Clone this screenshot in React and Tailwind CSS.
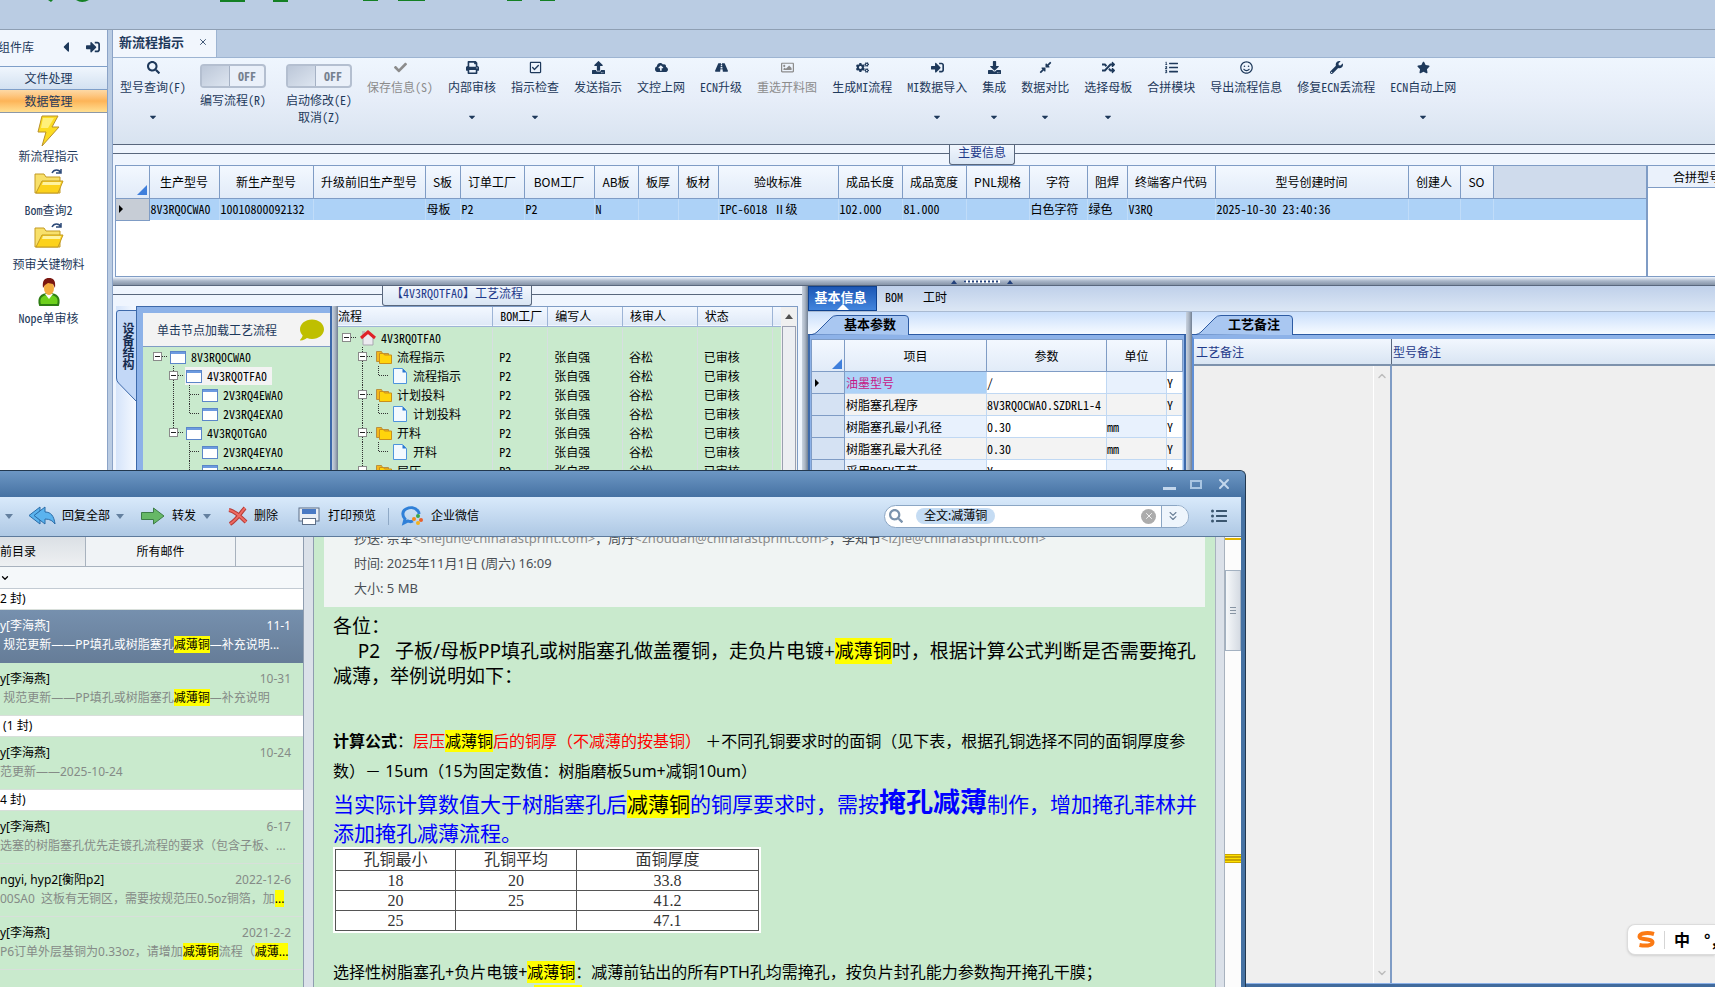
import React, { useState } from "react";
import {
  FaSearch,
  FaCheck,
  FaPrint,
  FaRegCheckSquare,
  FaUpload,
  FaCloudUploadAlt,
  FaRoad,
  FaRegImage,
  FaCogs,
  FaSignInAlt,
  FaDownload,
  FaCompressAlt,
  FaRandom,
  FaListOl,
  FaRegSmile,
  FaWrench,
  FaStar,
  FaCaretDown,
  FaCaretLeft,
  FaComment,
  FaListUl
} from "react-icons/fa";
import { ChevronDown, ChevronUp, ChevronsDown, X } from "lucide-react";

const toolbarItems = [
  { label: "保存信息(S)", icon: FaCheck, disabled: true },
  { label: "内部审核", icon: FaPrint, menu: true },
  { label: "指示检查", icon: FaRegCheckSquare, menu: true },
  { label: "发送指示", icon: FaUpload },
  { label: "文控上网", icon: FaCloudUploadAlt },
  { label: "ECN升级", icon: FaRoad },
  { label: "重选开料图", icon: FaRegImage, disabled: true },
  { label: "生成MI流程", icon: FaCogs },
  { label: "MI数据导入", icon: FaSignInAlt, menu: true },
  { label: "集成", icon: FaDownload, menu: true },
  { label: "数据对比", icon: FaCompressAlt, menu: true },
  { label: "选择母板", icon: FaRandom, menu: true },
  { label: "合拼模块", icon: FaListOl },
  { label: "导出流程信息", icon: FaRegSmile },
  { label: "修复ECN丢流程", icon: FaWrench },
  { label: "ECN自动上网", icon: FaStar, menu: true }
];

const mainColumns = [
  { name: "生产型号", width: 70, value: "8V3RQ0CWA0" },
  { name: "新生产型号", width: 94, value: "10010800092132" },
  { name: "升级前旧生产型号", width: 112, value: "" },
  { name: "S板", width: 35, value: "母板" },
  { name: "订单工厂", width: 64, value: "P2" },
  { name: "BOM工厂", width: 70, value: "P2" },
  { name: "AB板", width: 44, value: "N" },
  { name: "板厚", width: 40, value: "" },
  { name: "板材", width: 40, value: "" },
  { name: "验收标准", width: 120, value: "IPC-6018 Ⅱ级" },
  { name: "成品长度", width: 64, value: "102.000" },
  { name: "成品宽度", width: 64, value: "81.000" },
  { name: "PNL规格", width: 63, value: "" },
  { name: "字符", width: 58, value: "白色字符" },
  { name: "阻焊", width: 40, value: "绿色" },
  { name: "终端客户代码", width: 88, value: "V3RQ" },
  { name: "型号创建时间", width: 193, value: "2025-10-30 23:40:36" },
  { name: "创建人", width: 52, value: "" },
  { name: "SO", width: 33, value: "" }
];

const boardTree = [
  { label: "8V3RQ0CWA0", cells: ["root"] },
  { label: "4V3RQ0TFA0", cells: ["blank", "box"], selected: true },
  { label: "2V3RQ4EWA0", cells: ["blank", "line", "tee"] },
  { label: "2V3RQ4EXA0", cells: ["blank", "line", "end"] },
  { label: "4V3RQ0TGA0", cells: ["blank", "lastBox"] },
  { label: "2V3RQ4EYA0", cells: ["blank", "blank", "tee"] },
  { label: "2V3RQ4EZA0", cells: ["blank", "blank", "tee"] }
];

const processTree = [
  { label: "4V3RQ0TFA0", icon: "home", cells: ["root"] },
  { label: "流程指示", icon: "folder", cells: ["blank", "box"] },
  { label: "流程指示", icon: "file", cells: ["blank", "line", "end"] },
  { label: "计划投料", icon: "folder", cells: ["blank", "box"] },
  { label: "计划投料", icon: "file", cells: ["blank", "line", "end"] },
  { label: "开料", icon: "folder", cells: ["blank", "box"] },
  { label: "开料", icon: "file", cells: ["blank", "line", "end"] },
  { label: "层压", icon: "folder", cells: ["blank", "box"] }
];

const params = [
  { name: "油墨型号", value: "/", unit: "", active: true },
  { name: "树脂塞孔程序", value: "8V3RQ0CWA0.SZDRL1-4", unit: "" },
  { name: "树脂塞孔最小孔径", value: "0.30", unit: "mm" },
  { name: "树脂塞孔最大孔径", value: "0.30", unit: "mm" },
  { name: "采用POFV工艺", value: "Y", unit: "" }
];

const Caret = ({ className = "" }) => (
  <svg viewBox="0 0 8 5" className={`w-2 h-[5px] shrink-0 ${className}`}>
    <path d="M0 0h8L4 5z" fill="currentColor" />
  </svg>
);

const TreeCell = ({ kind }) => {
  const box = kind === "root" || kind === "box" || kind === "lastBox";
  const dots = { stroke: "#333", strokeDasharray: "1 1", fill: "none" };
  return (
    <svg className="w-4 h-[19px] overflow-visible shrink-0">
      {(kind === "line" || kind === "tee" || kind === "box") && (
        <path d="M8.5 0v19" {...dots} />
      )}
      {(kind === "end" || kind === "lastBox") && (
        <path d="M8.5 0v9" {...dots} />
      )}
      {kind !== "line" && kind !== "blank" && (
        <path d="M9 9.5h9" {...dots} />
      )}
      {box && (
        <>
          <rect x="4.5" y="5.5" width="8" height="8" fill="#fff" stroke="#8a8a8a" />
          <path d="M6 9.5h5" stroke="#222" />
        </>
      )}
    </svg>
  );
};

const WindowIcon = () => (
  <svg viewBox="0 0 16 14" className="w-4 h-[14px] shrink-0">
    <rect x="0.5" y="1.5" width="15" height="12" fill="#fff" stroke="#5b86c8" />
    <rect x="1" y="2" width="14" height="2" fill="#6d9be0" />
  </svg>
);

const NodeIcon = ({ type }) => {
  if (type === "home") {
    return (
      <svg viewBox="0 0 16 16" className="w-4 h-4 shrink-0">
        <path d="M3 8l5-5 5 5v7H3z" fill="#eceaf0" stroke="#a9a7b0" />
        <path d="M2 1h3v4H2z" fill="#bbb" />
        <path d="M1 8l7-6 7 6" stroke="#e02228" strokeWidth="3" fill="none" />
      </svg>
    );
  }
  if (type === "folder") {
    return (
      <svg viewBox="0 0 16 14" className="w-4 h-[14px] shrink-0">
        <path d="M.5 1.500h5l1 2h6v8H.5z" fill="#f5b81c" stroke="#b9903f" />
        <path d="M3.500 3.500h4l1 1.500h7v8.500h-12z" fill="#ffd40c" stroke="#c98f1c" />
      </svg>
    );
  }
  return (
    <svg viewBox="0 0 14 16" className="w-[14px] h-4 shrink-0 mx-px">
      <path d="M.5.5h9l4 4v11H.5z" fill="#f3f9ff" stroke="#4d94dc" />
      <path d="M9.500.5l4 4h-4z" fill="#2b78d2" />
    </svg>
  );
};

const LightningIcon = () => (
  <svg viewBox="0 0 24 32" className="w-6 h-8">
    <path d="M5 1h16l-6 11h7L5 31l4-14H1z" fill="#fcdc22" stroke="#b8902a" />
    <path d="M6 3h11l-6 10H4z" fill="#fff07a" />
  </svg>
);

const OpenFolderIcon = () => (
  <svg viewBox="0 0 30 26" className="w-[30px] h-[26px]">
    <path d="M1 5h9l2 3h14v16H1z" fill="#f8e06a" stroke="#c39a22" />
    <path d="M8 12h21l-5 12H2z" fill="#fcd21c" stroke="#c39a22" />
    <path d="M9 13h18l-1 3H8z" fill="#fff3a0" />
    <path d="M18 4c2-4 7-4 9 0M27 0v4h-5" stroke="#2d4a78" strokeWidth="1.500" fill="none" />
  </svg>
);

const PersonIcon = () => (
  <svg viewBox="0 0 24 30" className="w-6 h-[30px]">
    <path d="M3 28c-2-7 1-11 9-11s11 4 9 11z" fill="#6ed01c" stroke="#2d7d12" strokeWidth="2" />
    <path d="M8 17l4 5 4-5z" fill="#fff" />
    <ellipse cx="12" cy="11" rx="5" ry="7" fill="#f3ac3e" />
    <path d="M6 11C5 3 8 1 12 1s7 2 6 10l-2-4-5-1-3 2z" fill="#7a1710" />
  </svg>
);

const sideItems = [
  { label: "新流程指示", icon: LightningIcon },
  { label: "Bom查询2", icon: OpenFolderIcon },
  { label: "预审关键物料", icon: OpenFolderIcon },
  { label: "Nope单审核", icon: PersonIcon }
];

const Sidebar = () => (
  <aside className="w-[108px] shrink-0 flex flex-col bg-white border-r border-[#8ba3c7] text-[#1e395b]">
    <div className="h-9 flex items-center pb-0.5 bg-[#f1f6fd] overflow-hidden">
      <span className="-ml-0.5 w-[60px] shrink-0">组件库</span>
      <button aria-label="收起" className="w-7">
        <FaCaretLeft className="w-4 h-4" />
      </button>
      <button aria-label="固定">
        <FaSignInAlt className="w-[14px] h-[14px]" />
      </button>
    </div>
    <button className="h-6 pr-[10px] border-y border-[#7f9fc9] bg-gradient-to-b from-[#f0f6fd] to-[#d3e1f1]">
      文件处理
    </button>
    <button className="h-[23px] pr-[10px] border-b border-[#8b98a8] bg-gradient-to-b from-[#fdd9a5] via-[#fdb457] to-[#ffdf91]">
      数据管理
    </button>
    <nav className="flex flex-col">
      {sideItems.map((item) => (
        <button
          key={item.label}
          className="h-[54px] pr-[10px] flex flex-col items-center justify-between pt-0.5 pb-[3px]"
        >
          <item.icon />
          <span className="leading-4">{item.label}</span>
        </button>
      ))}
    </nav>
  </aside>
);

const ToolButton = ({ item }) => (
  <button
    disabled={item.disabled}
    className={`flex flex-col items-center whitespace-nowrap shrink-0 ${item.disabled ? "text-[#8c8c8c]" : "text-[#1e395b]"}`}
  >
    <item.icon className="w-[13px] h-[13px] mt-px" />
    <span className="leading-4 mt-[5px]">{item.label}</span>
    {item.menu && <FaCaretDown className="w-[10px] h-[10px] mt-[17px]" />}
  </button>
);

const Toggle = ({ lines }) => {
  const [on, setOn] = useState(false);
  return (
    <label className="w-[68px] shrink-0 flex flex-col items-center text-[#1e395b] whitespace-nowrap">
      <input
        type="checkbox"
        className="sr-only"
        checked={on}
        onChange={() => setOn(!on)}
      />
      <span className="w-[66px] h-6 mb-[3px] flex border-2 border-[#b4bfd0] rounded-sm bg-[#eaf0f9]">
        <span className="w-7 bg-gradient-to-br from-[#bcc7d8] to-[#dde5f0] border-r border-[#a5b1c4]" />
        <span className="flex-1 text-center leading-5 font-bold text-[#76818f]">
          {on ? "ON" : "OFF"}
        </span>
      </span>
      {lines.map((line) => (
        <span key={line} className="leading-[17px]">
          {line}
        </span>
      ))}
    </label>
  );
};

const Toolbar = () => (
  <div className="h-[87px] shrink-0 flex items-start gap-[15px] pl-[7px] pt-[2px] bg-gradient-to-b from-[#eff6fe] via-[#e6edf8] to-[#d8e3f0] border-b border-[#59677d] overflow-hidden">
    <ToolButton item={{ label: "型号查询(F)", icon: FaSearch, menu: true }} />
    <div className="flex gap-[18px] pt-1 -ml-[2px] -mr-px">
      <Toggle lines={["编写流程(R)"]} />
      <Toggle lines={["启动修改(E)", "取消(Z)"]} />
    </div>
    {toolbarItems.map((item) => (
      <ToolButton key={item.label} item={item} />
    ))}
  </div>
);

// Group frame with its title sitting on the top line
const GroupTitle = ({ children, className = "" }) => (
  <div className="h-5 shrink-0 flex items-start">
    <span className={`h-[9px] border-b border-[#59677d] ${className}`} />
    <span className="h-5 px-2 border border-t-0 border-[#59677d] rounded-b-[3px] bg-gradient-to-b from-[#f2f7fe] to-[#d9e5f3] text-[#1f3a8a] leading-[14px] whitespace-nowrap">
      {children}
    </span>
    <span className="flex-1 h-[9px] border-b border-[#59677d]" />
  </div>
);

const CornerMark = () => (
  <svg viewBox="0 0 10 10" className="w-[10px] h-[10px] ml-auto mr-[2px] mt-4">
    <path d="M10 0v10H0z" fill="#3f7fdc" />
  </svg>
);

const RowMark = () => (
  <svg viewBox="0 0 4 8" className="w-1 h-2 ml-[3px]">
    <path d="M0 0l4 4-4 4z" fill="#000" />
  </svg>
);

const MainGrid = () => (
  <section className="shrink-0 flex flex-col bg-[#eff5fe]">
    <GroupTitle className="w-[836px]">主要信息</GroupTitle>
    <div className="h-[112px] ml-[2px] flex border-y border-[#7f9cc5] bg-white">
      <div className="flex-1 min-w-0 border-l border-[#7f9cc5]">
        <table className="w-full table-fixed border-collapse whitespace-nowrap">
          <colgroup>
            <col style={{ width: 33 }} />
            {mainColumns.map((c) => (
              <col key={c.name} style={{ width: c.width }} />
            ))}
            <col />
          </colgroup>
          <thead>
            <tr className="h-8 bg-gradient-to-b from-[#f3f8ff] to-[#e1ebf8]">
              <th className="border-r border-b border-[#7f9cc5] p-0">
                <CornerMark />
              </th>
              {mainColumns.map((c) => (
                <th
                  key={c.name}
                  className="border-r border-b border-[#7f9cc5] p-0 font-normal text-black font-['Noto_Sans_CJK_SC',sans-serif]"
                >
                  {c.name}
                </th>
              ))}
              <th className="bg-[#cfdbec] border-b border-[#7f9cc5] p-0" />
            </tr>
          </thead>
          <tbody>
            <tr className="h-[22px] bg-[#add2f7]">
              <td className="bg-[#c7cdd6] border-r border-b border-[#7f9cc5] p-0">
                <RowMark />
              </td>
              {mainColumns.map((c) => (
                <td key={c.name} className="border-r border-[#c0dcf8] p-0 pl-px text-black">
                  {c.value}
                </td>
              ))}
              <td className="p-0" />
            </tr>
          </tbody>
        </table>
      </div>
      <div className="w-[69px] shrink-0 border-l-2 border-[#7f9cc5] overflow-hidden">
        <div className="h-[22px] pl-[25px] leading-[21px] border-b border-[#7f9cc5] bg-[#eaf1fb] text-black whitespace-nowrap font-['Noto_Sans_CJK_SC',sans-serif]">
          合拼型号
        </div>
      </div>
    </div>
    <div className="h-[9px] flex items-end justify-center bg-gradient-to-b from-[#eff5fe] via-[#a9b6c8] to-[#8593a7] border-b border-[#59677d]">
      <svg viewBox="0 0 62 6" className="w-[62px] h-[6px] ml-[136px]">
        <path d="M0 5l3-4 3 4zM56 5l3-4 3 4z" fill="#24427c" />
        <path d="M13 2.500h36" stroke="#fff" strokeWidth="3" />
        <path d="M13 2.500h36" stroke="#24427c" strokeWidth="2" strokeDasharray="2 2" />
      </svg>
    </div>
  </section>
);

const VSplitter = () => (
  <div className="w-[6px] shrink-0 bg-gradient-to-r from-[#c8d2df] via-[#aab5c4] to-[#717f92]" />
);

const BoardTree = () => (
  <div className="flex shrink-0 ml-[3px]">
    <div className="w-5 bg-gradient-to-r from-[#d5e4fa] to-[#f5f9ff] flex flex-col">
      <div className="relative h-[94px] mt-1">
        <svg viewBox="0 0 20 94" className="absolute inset-0 w-5 h-[94px]">
          <path d="M20 .5H3Q.5.5.5 3v65q0 3 2 5L20 91" fill="#c3d8f7" stroke="#3d69aa" />
        </svg>
        <span className="relative block pt-3 pl-[6px] font-bold text-[#152b50] leading-3 [writing-mode:vertical-rl]">
          设备结构
        </span>
      </div>
    </div>
    <div className="w-[196px] flex flex-col bg-[#8db2e8] border-l border-t border-r-2 border-[#3d69aa] pt-[6px] pl-[6px]">
      <div className="h-[34px] flex items-center justify-between pl-[14px] pr-[6px] bg-[#f3f3f3] border-b border-[#7f9cc5] text-[#1e395b]">
        单击节点加载工艺流程
        <FaComment className="w-6 h-6 text-[#bfbf00]" />
      </div>
      <ul className="flex-1 bg-[#c9eacd] pl-[6px]">
        {boardTree.map((node) => (
          <li key={node.label} className="h-[19px] flex items-center text-black">
            {node.cells.map((kind, i) => (
              <TreeCell key={i} kind={kind} />
            ))}
            <span
              className={`h-[18px] flex items-center gap-[5px] ml-1 pl-px pr-[5px] ${node.selected ? "bg-[#f3f3f3]" : ""}`}
            >
              <WindowIcon />
              {node.label}
            </span>
          </li>
        ))}
      </ul>
    </div>
  </div>
);

const ProcessTree = () => (
  <div className="flex-1 min-w-0 flex mr-1 bg-[#c9eacd] border-t border-r border-[#7f9cc5]">
    <table className="flex-1 table-fixed border-collapse text-left text-black whitespace-nowrap self-start">
      <thead>
        <tr className="h-[19px] bg-gradient-to-b from-[#f3f8ff] to-[#dfe9f7] border-b border-[#9db4d6]">
          <th className="w-[155px] p-0 font-normal border-r border-[#9db4d6]">流程</th>
          <th className="w-[55px] p-0 pl-[7px] font-normal border-r border-[#9db4d6]">BOM工厂</th>
          <th className="w-[75px] p-0 pl-[7px] font-normal border-r border-[#9db4d6]">编写人</th>
          <th className="w-[75px] p-0 pl-[7px] font-normal border-r border-[#9db4d6]">核审人</th>
          <th className="w-[75px] p-0 pl-[7px] font-normal border-r border-[#9db4d6]">状态</th>
          <th className="w-[9px] p-0" />
        </tr>
        <tr className="h-[2px]">
          <td colSpan={6} className="p-0" />
        </tr>
      </thead>
      <tbody>
        {processTree.map((node, i) => (
          <tr key={i} className="h-[19px]">
            <td className="p-0 border-r border-[#d7dfe0]">
              <span className="h-[19px] flex items-center">
                {node.cells.map((kind, n) => (
                  <TreeCell key={n} kind={kind} />
                ))}
                <span className="flex items-center gap-[5px] ml-[6px]">
                  <NodeIcon type={node.icon} />
                  {node.label}
                </span>
              </span>
            </td>
            <td className="p-0 pl-[6px] border-r border-[#d7dfe0]">{i > 0 && "P2"}</td>
            <td className="p-0 pl-[6px] border-r border-[#d7dfe0]">{i > 0 && "张自强"}</td>
            <td className="p-0 pl-[6px] border-r border-[#d7dfe0]">{i > 0 && "谷松"}</td>
            <td className="p-0 pl-[6px] border-r border-[#d7dfe0]">{i > 0 && "已审核"}</td>
            <td className="p-0" />
          </tr>
        ))}
      </tbody>
    </table>
    <div className="w-4 shrink-0 bg-[#f0f0f0] flex flex-col items-center">
      <Caret className="rotate-180 mt-[7px] text-[#505050]" />
      <span className="w-[14px] flex-1 mt-[7px] border border-[#9a9fb0] bg-[#eceef2]" />
    </div>
  </div>
);

const SlantTab = ({ children }) => (
  <div className="h-[23px] shrink-0 flex items-end pl-1 bg-gradient-to-b from-[#c9defb] to-[#f7fbff] border-b border-[#2d5ba3]">
    <div className="relative w-[97px] h-[20px] -mb-px">
      <svg viewBox="0 0 97 20" className="absolute inset-0 w-full h-full">
        <path d="M0 19.500Q3 19 5 17L19 3Q21 .5 25 .5H93Q96.500.5 96.500 4V20" fill="#a9c7f1" stroke="#2d5ba3" />
      </svg>
      <h3 className="relative pl-8 text-[13px] leading-[18px] font-bold text-black">{children}</h3>
    </div>
  </div>
);

const ParamPanel = () => (
  <div className="w-[378px] shrink-0 flex flex-col">
    <SlantTab>基本参数</SlantTab>
    <div className="flex-1 bg-[#8db2e8] border-x-2 border-[#3d69aa] pt-1 px-px">
      <table className="w-full table-fixed border-collapse whitespace-nowrap text-black bg-white">
        <thead>
          <tr className="h-8 bg-gradient-to-b from-[#f3f8ff] to-[#e1ebf8]">
            <th className="w-[33px] p-0 border border-[#7f9cc5]">
              <CornerMark />
            </th>
            <th className="w-[142px] p-0 border border-[#7f9cc5] font-normal">项目</th>
            <th className="w-[120px] p-0 border border-[#7f9cc5] font-normal">参数</th>
            <th className="w-[60px] p-0 border border-[#7f9cc5] font-normal">单位</th>
            <th className="p-0 border border-[#7f9cc5]" />
          </tr>
        </thead>
        <tbody>
          {params.map((row, i) => (
            <tr
              key={row.name}
              className={`h-[22px] ${i % 2 ? "bg-[#f3f3f3]" : "bg-white"}`}
            >
              <td className="p-0 bg-[#d5e2f3] border border-[#7f9cc5]">
                {row.active && <RowMark />}
              </td>
              <td
                className={`p-0 pl-px border border-[#c0d8f3] ${row.active ? "bg-[#add2f7] text-[#c71585]" : i % 2 ? "bg-[#f3f3f3]" : "bg-[#e8f1fd]"}`}
              >
                {row.name}
              </td>
              <td className="p-0 border border-[#c0d8f3]">{row.value}</td>
              <td className={`p-0 border border-[#c0d8f3] ${i % 2 ? "bg-[#f3f3f3]" : "bg-[#e8f1fd]"}`}>
                {row.unit}
              </td>
              <td className="p-0 border border-[#c0d8f3]">Y</td>
            </tr>
          ))}
        </tbody>
      </table>
    </div>
  </div>
);

const RemarkPanel = () => (
  <div className="flex-1 min-w-0 flex flex-col">
    <SlantTab>工艺备注</SlantTab>
    <div className="flex-1 flex flex-col border-l-2 border-t-4 border-l-[#5f8fd6] border-t-[#8db2e8] bg-[#efefef]">
      <div className="h-[27px] flex items-center border-b-2 border-[#7d92ac] bg-gradient-to-b from-[#f2f7fe] to-[#d9e5f3] text-[#1f3a8a]">
        <span className="w-[197px] pl-[2px]">工艺备注</span>
        <span className="flex-1 h-full flex items-center pl-px border-l border-[#59677d]">
          型号备注
        </span>
      </div>
      <div className="flex-1 flex">
        <div className="w-[198px] flex justify-end border-r-2 border-[#7f9cc5]">
          <div className="w-[17px] flex flex-col justify-between items-center py-1 border-l border-white text-[#bdbdbd]">
            <ChevronUp className="w-3 h-3" strokeWidth={3} />
            <ChevronDown className="w-3 h-3" strokeWidth={3} />
          </div>
        </div>
      </div>
    </div>
    <div className="h-1 shrink-0 bg-[#416b9d] border-t border-[#8db2e8]" />
  </div>
);

const LowerPanels = () => (
  <div className="flex-1 min-h-0 flex bg-[#eff5fe]">
    <section className="w-[689px] shrink-0 flex flex-col min-h-0">
      <GroupTitle className="w-[269px]">【4V3RQ0TFA0】工艺流程</GroupTitle>
      <div className="flex-1 flex min-h-0">
        <BoardTree />
        <VSplitter />
        <ProcessTree />
      </div>
    </section>
    <VSplitter />
    <section className="flex-1 min-w-0 flex flex-col">
      <div className="h-[26px] shrink-0 flex items-start gap-5 bg-gradient-to-b from-[#bfd0ea] to-[#dce7f5] border-b border-[#a9bad2] text-black leading-[22px]">
        <button className="relative w-[69px] h-full -mr-3 pr-1 pb-[3px] bg-gradient-to-b from-[#1d57b5] to-[#4285dd] border border-[#0e418f] text-white text-[13px] font-bold leading-5">
          基本信息
          <svg viewBox="0 0 12 6" className="absolute bottom-0 left-7 w-3 h-[6px]">
            <path d="M0 6l6-6 6 6z" fill="#fff" />
          </svg>
        </button>
        <button>BOM</button>
        <button>工时</button>
      </div>
      <div className="flex-1 min-h-0 flex">
        <ParamPanel />
        <VSplitter />
        <RemarkPanel />
      </div>
    </section>
  </div>
);

const Mark = ({ children }) => (
  <mark className="bg-[#ffff00] text-black">{children}</mark>
);

const ReplyAllIcon = () => (
  <svg viewBox="0 0 28 20" className="w-7 h-5">
    <path d="M12 1L1 9.500 12 18v-4l-5-4.500L12 5z" fill="#5bb3ee" stroke="#2a6ca8" />
    <path d="M17 1L6 9.500 17 18v-5c5 0 8 2 10 5-1-8-4-12-10-12z" fill="#5bb3ee" stroke="#2a6ca8" />
  </svg>
);

const ForwardIcon = () => (
  <svg viewBox="0 0 24 18" className="w-6 h-[18px]">
    <path d="M.5 5.500h12V1L23 9l-10.500 8v-4.500H.5z" fill="#66b866" stroke="#3d7d47" />
  </svg>
);

const DeleteIcon = () => (
  <svg viewBox="0 0 20 20" className="w-5 h-5">
    <path d="M1 4c6 1 12 7 17 12M17 2C13 6 10 13 2 18" stroke="#b53c38" strokeWidth="4" fill="none" />
    <path d="M1 4c6 1 12 7 17 12M17 2C13 6 10 13 2 18" stroke="#ee6a62" strokeWidth="2" fill="none" />
  </svg>
);

const PrintIcon = () => (
  <svg viewBox="0 0 22 18" className="w-[22px] h-[18px]">
    <rect x="1" y="1" width="20" height="13" fill="#e8eef5" stroke="#5d6f88" />
    <rect x="4" y="2" width="14" height="5" fill="#4a7ac4" />
    <rect x="4.500" y="11.500" width="13" height="6" fill="#fff" stroke="#5d6f88" />
  </svg>
);

const WeComIcon = () => (
  <svg viewBox="0 0 24 20" className="w-6 h-5">
    <path d="M12 15c-2 1-3 1-5 0l-4 2 1-4C1 10 1 5 5 3s9-2 12 2c1 1 1 2 1 3" stroke="#2f80d8" strokeWidth="3" fill="none" />
    <circle cx="17" cy="10" r="2" fill="#3aa648" />
    <circle cx="20" cy="14" r="2" fill="#e8602c" />
    <circle cx="17" cy="17" r="2" fill="#f2b21c" />
    <circle cx="13" cy="13" r="2" fill="#f08a1c" />
  </svg>
);

const MailRow = ({ from, date, selected, children }) => (
  <li
    className={`h-[53px] shrink-0 flex flex-col justify-center pr-3 pb-px border-b overflow-hidden ${selected ? "bg-gradient-to-b from-[#7690ae] to-[#667d98] border-[#667d98] text-white" : "border-[#d8dfda] text-[#858b87]"}`}
  >
    <div className="flex justify-between leading-[18px]">
      <span className={selected ? "" : "text-black"}>{from}</span>
      <span>{date}</span>
    </div>
    <div className="leading-5 whitespace-pre">{children}</div>
  </li>
);

const MailGroup = ({ children }) => (
  <li className="h-[21px] shrink-0 bg-white text-black leading-5 border-b border-[#d8dfda] whitespace-pre">
    {children}
  </li>
);

const MailList = () => (
  <div className="w-[304px] shrink-0 flex flex-col border-r border-[#8f9db0] bg-[#c9eacd]">
    <div className="h-[30px] shrink-0 flex text-black border-b border-[#a8b2be]">
      <button className="w-[86px] text-left bg-gradient-to-b from-[#dbe0e5] to-[#eef0f2] border-r border-[#a8b2be]">
        前目录
      </button>
      <button className="w-[150px] bg-[#f0f3f6] border-r border-[#a8b2be]">所有邮件</button>
      <span className="flex-1 bg-[#f0f3f6]" />
    </div>
    <div className="h-[22px] shrink-0 flex items-center bg-[#f5f8fa] border-b border-[#c3cbd3]">
      <ChevronDown className="w-[10px] h-[10px]" strokeWidth={3} />
    </div>
    <ul className="flex-1 min-h-0 flex flex-col overflow-hidden">
      <MailGroup>2 封)</MailGroup>
      <MailRow from="y[李海燕]" date="11-1" selected>
        {" "}规范更新——PP填孔或树脂塞孔<Mark>减薄铜</Mark>—补充说明...
      </MailRow>
      <MailRow from="y[李海燕]" date="10-31">
        {" "}规范更新——PP填孔或树脂塞孔<Mark>减薄铜</Mark>—补充说明
      </MailRow>
      <MailGroup>{" (1 封)"}</MailGroup>
      <MailRow from="y[李海燕]" date="10-24">
        范更新——2025-10-24
      </MailRow>
      <MailGroup>4 封)</MailGroup>
      <MailRow from="y[李海燕]" date="6-17">
        选塞的树脂塞孔优先走镀孔流程的要求（包含子板、...
      </MailRow>
      <MailRow from="ngyi, hyp2[衡阳p2]" date="2022-12-6">
        00SA0  这板有无铜区，需要按规范压0.5oz铜箔，加<Mark>...</Mark>
      </MailRow>
      <MailRow from="y[李海燕]" date="2021-2-2">
        P6订单外层基铜为0.33oz，请增加<Mark>减薄铜</Mark>流程（<Mark>减薄...</Mark>
      </MailRow>
      <MailRow from="y[李海燕]" date="2021-1-8" />
    </ul>
  </div>
);

const MailBody = () => (
  <article className="flex-1 min-w-0 overflow-hidden bg-[#c9eacd] border-l border-[#8f9db0] pl-[10px] pr-[10px] text-black whitespace-nowrap">
    <header className="-mt-[11px] pl-[30px] pb-[6px] bg-[#f0f4f3] text-[13px] leading-[25px] text-[#4a4f55]">
      <p>
        抄送: 佘军<span className="text-[#8a8a8a]">&lt;shejun@chinafastprint.com&gt;</span>，周丹
        <span className="text-[#8a8a8a]">&lt;zhoudan@chinafastprint.com&gt;</span>，李知节
        <span className="text-[#8a8a8a]">&lt;lzjie@chinafastprint.com&gt;</span>
      </p>
      <p>时间: 2025年11月1日 (周六) 16:09</p>
      <p>大小: 5 MB</p>
    </header>
    <div className="pl-[9px]">
      <div className="pt-[7px] text-[19px] leading-[25px]">
        <p>各位：</p>
        <p className="whitespace-pre">
          {"     "}P2{"   "}子板/母板PP填孔或树脂塞孔做盖覆铜，走负片电镀+<Mark>减薄铜</Mark>时，根据计算公式判断是否需要掩孔
        </p>
        <p>减薄，举例说明如下：</p>
      </div>
      <div className="mt-[37px] text-base leading-[30px]">
        <p>
          <b>计算公式</b>：
          <span className="text-[#ff0000]">
            层压<Mark>减薄铜</Mark>后的铜厚（不减薄的按基铜）
          </span>{" "}
          ＋不同孔铜要求时的面铜（见下表，根据孔铜选择不同的面铜厚度参
        </p>
        <p>数）－ 15um（15为固定数值：树脂磨板5um+减铜10um）</p>
      </div>
      <div className="mt-1 text-[21px] leading-[29px] text-[#0000ff]">
        <p className="h-[29px]">
          当实际计算数值大于树脂塞孔后<Mark>减薄铜</Mark>的铜厚要求时，需按
          <b className="text-[27px] leading-5">掩孔减薄</b>制作，增加掩孔菲林并
        </p>
        <p className="h-7">添加掩孔减薄流程。</p>
      </div>
      <div className="w-[428px] bg-white p-[2px] text-[#333]">
        <table className="w-full table-fixed border-collapse text-center text-base leading-5 font-['Liberation_Serif','Noto_Sans_CJK_SC',serif]">
          <thead>
            <tr className="h-[21px]">
              <th className="w-[120px] p-0 border border-[#555] font-normal">孔铜最小</th>
              <th className="w-[121px] p-0 border border-[#555] font-normal">孔铜平均</th>
              <th className="p-0 border border-[#555] font-normal">面铜厚度</th>
            </tr>
          </thead>
          <tbody>
            {[
              ["18", "20", "33.8"],
              ["20", "25", "41.2"],
              ["25", "", "47.1"]
            ].map((row) => (
              <tr key={row[0]} className="h-5">
                {row.map((cell, i) => (
                  <td key={i} className="p-0 border border-[#555] leading-[19px]">{cell}</td>
                ))}
              </tr>
            ))}
          </tbody>
        </table>
      </div>
      <div className="mt-[27px] text-base leading-6">
        <p>
          选择性树脂塞孔+负片电镀+<Mark>减薄铜</Mark>：减薄前钻出的所有PTH孔均需掩孔，按负片封孔能力参数掏开掩孔干膜；
        </p>
        <p>
          （如非选择性树脂塞孔+负片<Mark>减薄铜</Mark>），减薄前钻出的孔按负片封孔能力，掩孔干膜）
        </p>
      </div>
    </div>
  </article>
);

const MailWindow = () => (
  <div className="absolute left-0 top-[470px] bottom-0 w-[1246px] flex flex-col rounded-tr-md border-t border-r border-[#22384f] bg-[#4672a3] pr-1 overflow-hidden font-['Noto_Sans','Noto_Sans_CJK_SC',sans-serif]">
    <div className="h-[26px] shrink-0 -mr-1 flex items-center justify-end gap-[14px] pr-[13px] bg-gradient-to-b from-[#6d97c4] to-[#4672a3] text-[#c3d7ec]">
      <button aria-label="最小化" className="w-[13px] h-[3px] mt-2 bg-[#c3d7ec]" />
      <button aria-label="最大化" className="w-3 h-[9px] border-2 border-[#a9c5e2]" />
      <button aria-label="关闭">
        <X className="w-4 h-4" strokeWidth={3} />
      </button>
    </div>
    <div className="h-10 shrink-0 flex items-center pl-[5px] pr-[14px] pb-px bg-gradient-to-b from-[#d9eafb] to-[#aec8e4] border-b border-[#5d7a9c] text-black whitespace-nowrap">
      <Caret className="text-[#64809f]" />
      <button className="flex items-center gap-[6px] ml-[15px]">
        <ReplyAllIcon />
        回复全部
        <Caret className="text-[#64809f]" />
      </button>
      <button className="flex items-center gap-[7px] ml-[17px]">
        <ForwardIcon />
        转发
        <Caret className="text-[#64809f]" />
      </button>
      <button className="flex items-center gap-[6px] ml-[17px]">
        <DeleteIcon />
        删除
      </button>
      <button className="flex items-center gap-2 ml-5">
        <PrintIcon />
        打印预览
      </button>
      <span className="w-px h-[17px] bg-[#8fa9c6] mx-3" />
      <button className="flex items-center gap-[6px]">
        <WeComIcon />
        企业微信
      </button>
      <div className="ml-auto w-[305px] h-[23px] flex items-center rounded-full border border-[#8ba6c4] bg-white overflow-hidden">
        <label htmlFor="mail-search" aria-label="搜索" className="px-1 text-[#7b93ad]">
          <FaSearch className="w-[14px] h-[14px]" />
        </label>
        <input
          id="mail-search"
          defaultValue="全文:减薄铜"
          className="w-[79px] h-4 ml-[9px] px-2 rounded-full bg-[#c5dcf3] outline-none"
        />
        <button
          aria-label="清除"
          className="ml-auto mr-[5px] w-[15px] h-[15px] flex items-center justify-center rounded-full bg-[#acacac] text-white"
        >
          <X className="w-[10px] h-[10px]" />
        </button>
        <button
          aria-label="展开"
          className="w-[27px] h-full pr-1 flex items-center justify-center border-l border-[#8ba6c4] bg-[#eef5fc] text-[#6a7f96]"
        >
          <ChevronsDown className="w-[14px] h-[14px]" />
        </button>
      </div>
      <button aria-label="列表" className="ml-[22px]">
        <FaListUl className="w-4 h-4 text-[#3b566f]" />
      </button>
    </div>
    <div className="flex-1 min-h-0 flex">
      <MailList />
      <div className="w-[9px] shrink-0 bg-[#dbe1e9]" />
      <MailBody />
      <div className="w-[10px] shrink-0 bg-[#dbe1e9] border-x border-[#a8b2be]" />
      <div className="w-4 shrink-0 bg-[#fcfcfc] flex flex-col">
        <div className="h-[2px] mt-px bg-[#e0b400]" />
        <div className="h-[81px] mt-[30px] flex flex-col items-center justify-center gap-[2px] border border-[#a3b1c1] bg-gradient-to-r from-[#f6f8fa] to-[#d5dbe3]">
          <span className="w-[6px] h-px bg-[#8794a3]" />
          <span className="w-[6px] h-px bg-[#8794a3]" />
          <span className="w-[6px] h-px bg-[#8794a3]" />
        </div>
        <div className="h-[9px] mt-[203px] py-px bg-[#c9a400] flex flex-col justify-between">
          <span className="h-px bg-[#ffe100]" />
          <span className="h-px bg-[#ffe100]" />
          <span className="h-px bg-[#ffe100]" />
        </div>
      </div>
    </div>
  </div>
);

const ImeBar = () => (
  <div className="absolute right-0 bottom-8 w-[88px] h-[31px] flex items-center pl-[9px] rounded-l-lg border border-r-0 border-[#dcdcdc] bg-white shadow overflow-hidden">
    <svg viewBox="0 0 18 17" className="w-[18px] h-[17px] shrink-0">
      <path
        d="M17 3C12 1.500 2.500 1.500 2.500 5.500c0 4 13 1.500 13 6 0 3.500-8 3.500-13 2.500"
        stroke="#fb7a14"
        strokeWidth="4"
        fill="none"
      />
    </svg>
    <span className="w-px h-[18px] mx-[9px] bg-[#d5d5d5] shrink-0" />
    <button className="pb-0.5 text-base leading-5 font-bold text-black shrink-0">中</button>
    <button className="ml-[14px] pb-0.5 text-base leading-5 font-bold text-black shrink-0">°,</button>
  </div>
);

const App = () => {
  return (
    <div className="relative h-screen overflow-hidden flex flex-col bg-[#bacce3] text-[12px] font-['Noto_Sans_Mono_CJK_SC','Noto_Sans_CJK_SC',monospace]">
      <div className="h-[30px] shrink-0 border-b border-[#8f9fb3]">
        <svg viewBox="0 0 560 3" className="w-[560px] h-[3px]">
          <path
            d="M48 0h5l-2 2zM76 0q6 4 13 0zM220 0h25v2h-25zM273 0h15v2h-15zM363 0h15v1h-15zM398 0h27v1h-27zM507 0h15v1h-15zM540 0h15v1h-15z"
            fill="#148024"
          />
        </svg>
      </div>
      <div className="flex-1 min-h-0 flex">
        <Sidebar />
        <main className="flex-1 min-w-0 flex flex-col ml-1 border-l border-[#8ba3c7]">
          <div className="h-[28px] shrink-0 flex border-b border-[#9db4d2]">
            <div className="w-[104px] flex items-center justify-between pl-[6px] pr-2 pb-[3px] bg-[#f1f6fd] border-r border-[#9db4d2] text-[#1e395b]">
              <h1 className="text-[13px] font-bold">新流程指示</h1>
              <button aria-label="关闭页签">
                <X className="w-[10px] h-[10px]" />
              </button>
            </div>
          </div>
          <Toolbar />
          <MainGrid />
          <LowerPanels />
        </main>
      </div>
      <MailWindow />
      <ImeBar />
    </div>
  );
};

export default App;
